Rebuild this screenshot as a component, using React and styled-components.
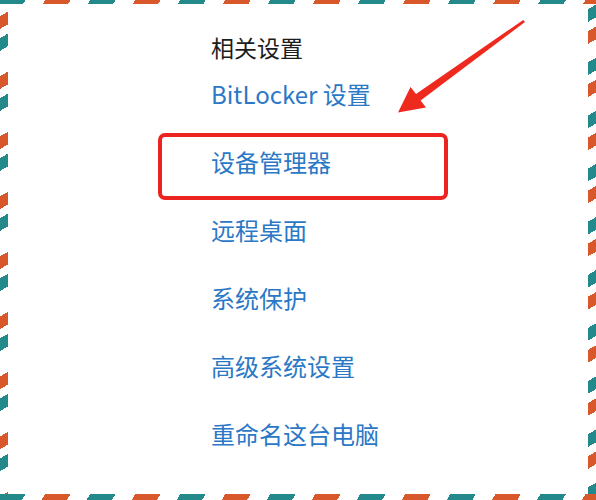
import React from "react";
import styled, { createGlobalStyle } from "styled-components";

const GlobalStyle = createGlobalStyle`
  html, body {
    margin: 0;
    padding: 0;
    background: #ffffff;
  }
  body {
    font-family: "Noto Sans CJK SC", "Noto Sans", sans-serif;
  }
`;

const TEAL = "#24898a";
const ORANGE = "#d8582b";

// airmail-style striped border, one layer per side
const Frame = styled.div`
  position: relative;
  width: 596px;
  height: 500px;
  box-sizing: border-box;
  padding: 4px 8px 6px 8px;
  background:
    repeating-linear-gradient(120deg, ${TEAL} 0 22px, transparent 22px 39px, ${ORANGE} 39px 61px, transparent 61px 78px) top left / 100% 4px no-repeat,
    repeating-linear-gradient(120deg, ${TEAL} 0 22px, transparent 22px 39px, ${ORANGE} 39px 61px, transparent 61px 78px) bottom left / 100% 6px no-repeat,
    repeating-linear-gradient(150deg, transparent 0 14px, ${ORANGE} 14px 25px, transparent 25px 33px, ${TEAL} 33px 44px, transparent 44px 52px) top left / 8px 100% no-repeat,
    repeating-linear-gradient(150deg, transparent 0 8px, ${TEAL} 8px 19px, transparent 19px 27px, ${ORANGE} 27px 38px, transparent 38px 46px) top right / 8px 100% no-repeat,
    #ffffff;
`;

const Panel = styled.div`
  height: 100%;
  background: #ffffff;
  display: flex;
  flex-direction: column;
  padding-left: 203px;
  box-sizing: border-box;
`;

const Header = styled.div`
  height: 56px;
  display: flex;
  align-items: flex-end;
  padding-bottom: 1px;
  box-sizing: border-box;
  font-size: 23px;
  line-height: 24px;
  color: #1c1c1c;
`;

const List = styled.div`
  display: flex;
  flex-direction: column;
`;

const Item = styled.div`
  position: relative;
  height: 68px;
  display: flex;
  align-items: center;
  font-size: 24px;
  line-height: 24px;
  color: #2a78c6;

  ${(p) =>
    p.$highlighted &&
    `
    &::before {
      content: "";
      position: absolute;
      left: -53px;
      top: 5px;
      width: 290px;
      height: 67px;
      box-sizing: border-box;
      border: 4px solid #ec2420;
      border-radius: 7px;
    }
  `}
`;

const ArrowLayer = styled.svg`
  position: absolute;
  left: 0;
  top: 0;
  pointer-events: none;
`;

const items = [
  { label: "BitLocker 设置" },
  { label: "设备管理器", highlighted: true },
  { label: "远程桌面" },
  { label: "系统保护" },
  { label: "高级系统设置" },
  { label: "重命名这台电脑" },
];

export default function App() {
  return (
    <>
      <GlobalStyle />
      <Frame>
        <Panel>
          <Header>相关设置</Header>
          <List>
            {items.map((it) => (
              <Item key={it.label} $highlighted={it.highlighted}>
                {it.label}
              </Item>
            ))}
          </List>
        </Panel>
        <ArrowLayer width="596" height="500" viewBox="0 0 596 500">
          <polygon
            points="523.2,20 416,94 410.5,87 398,112.5 426,107.5 420.6,100.6 525,22"
            fill="#ee2a1f"
          />
        </ArrowLayer>
      </Frame>
    </>
  );
}
